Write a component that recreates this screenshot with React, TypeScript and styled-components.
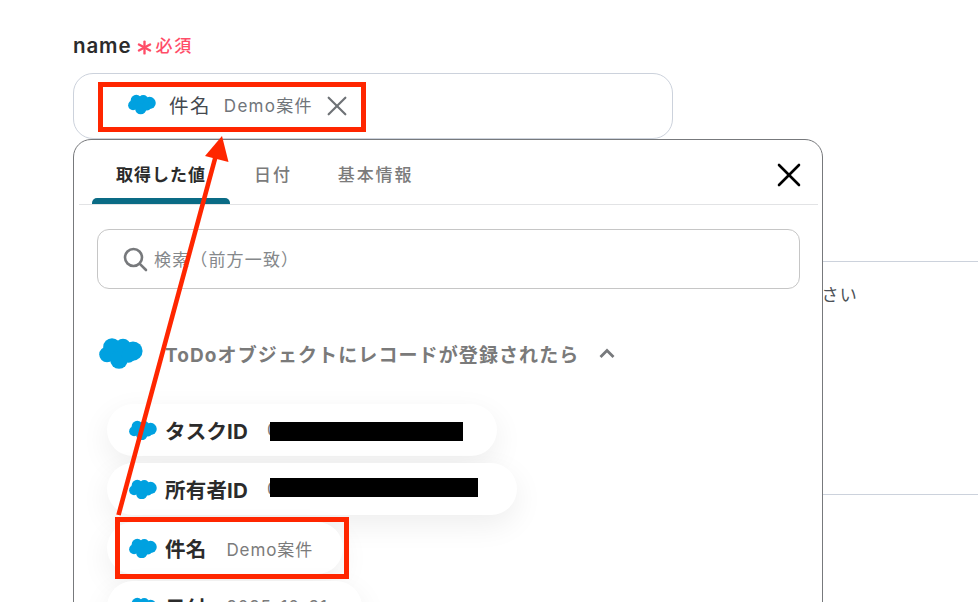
import React from "react";
import styled, { createGlobalStyle } from "styled-components";

const GlobalStyle = createGlobalStyle`
  html, body {
    margin: 0;
    padding: 0;
    background: #fff;
    font-family: "Inter", "Noto Sans CJK JP", sans-serif;
    overflow: hidden;
  }
`;

const Page = styled.div`
  position: relative;
  width: 978px;
  height: 602px;
  overflow: hidden;
  padding: 32px 0 0 73px;
  box-sizing: border-box;
`;

const LabelRow = styled.div`
  display: flex;
  align-items: center;
  height: 26px;
  margin-bottom: 15px;
`;

const LabelText = styled.span`
  font-size: 20.5px;
  font-weight: 600;
  letter-spacing: 0.9px;
  color: #2b2b2b;
`;

const Asterisk = styled.svg`
  width: 15px;
  height: 15px;
  margin: 4px 4px 0 5px;
`;

const Required = styled.span`
  font-size: 17px;
  font-weight: 500;
  letter-spacing: 1.8px;
  color: #ff4d68;
  margin-top: -2px;
`;

const Field = styled.div`
  display: flex;
  align-items: center;
  width: 600px;
  height: 66px;
  padding: 0 0 3px 27px;
  box-sizing: border-box;
  border: 1px solid #ccd2dc;
  border-radius: 20px;
`;

const Chip = styled.div`
  display: flex;
  align-items: center;
  height: 40px;
  width: 262px;
  padding-left: 27px;
  box-sizing: border-box;
  border-radius: 20px;
`;

const ChipName = styled.span`
  margin-left: 13px;
  font-size: 19.5px;
  letter-spacing: 1.4px;
  color: #44494f;
`;

const ChipValue = styled.span`
  margin-left: 13px;
  font-size: 17px;
  letter-spacing: 1.3px;
  color: #70757a;
`;

const ChipClose = styled.svg`
  width: 20px;
  height: 20px;
  margin: 2px 0 0 14px;
`;

const BackSection = styled.div`
  margin-top: 122px;
  height: 234px;
  width: 905px;
  box-sizing: border-box;
  padding: 19px 120px 0 0;
  border-top: 1px solid #ccd2dc;
  border-bottom: 1px solid #ccd2dc;
  text-align: right;
  font-size: 17px;
  letter-spacing: 1.2px;
  color: #4c5157;
`;

const Popup = styled.div`
  position: absolute;
  left: 73px;
  top: 139px;
  width: 750px;
  height: 520px;
  box-sizing: border-box;
  background: #fff;
  border: 1px solid #77797c;
  border-radius: 18px;
  padding: 0 4px 0 5px;
`;

const TabBar = styled.div`
  display: flex;
  align-items: stretch;
  height: 65px;
  box-sizing: border-box;
  padding-left: 13px;
  border-bottom: 1px solid #e2e3e5;
`;

const Tab = styled.div<{ $active?: boolean }>`
  position: relative;
  display: flex;
  align-items: center;
  padding: 3px ${(p) => (p.$active ? 24 : 22)}px 0 24px;
  font-size: 17px;
  font-weight: ${(p) => (p.$active ? 700 : 500)};
  letter-spacing: ${(p) => (p.$active ? 1 : 1.9)}px;
  color: ${(p) => (p.$active ? "#2b2b2b" : "#7b7b7b")};

  ${(p) =>
    p.$active &&
    `
    &::after {
      content: "";
      position: absolute;
      left: 0;
      right: 0;
      bottom: 0;
      height: 6px;
      border-radius: 5px 5px 0 0;
      background: #0a6b85;
    }
  `}
`;

const TabSpacer = styled.div`
  flex: 1;
`;

const CloseButton = styled.svg`
  width: 24px;
  height: 24px;
  margin: 23px 17px 0 0;
`;

const Body = styled.div`
  padding: 24px 18px 0 18px;
`;

const SearchBox = styled.div`
  display: flex;
  align-items: center;
  height: 60px;
  box-sizing: border-box;
  padding: 0 0 1px 24px;
  border: 1px solid #c6c6c6;
  border-radius: 12px;
`;

const SearchIcon = styled.svg`
  width: 26px;
  height: 26px;
  margin-right: 6px;
`;

const Placeholder = styled.span`
  font-size: 17px;
  letter-spacing: 1.15px;
  color: #85888b;
  margin-top: -1px;
`;

const GroupHeader = styled.div`
  display: flex;
  align-items: center;
  margin: 47px 0 0 2px;
  height: 34px;
`;

const GroupTitle = styled.span`
  margin-left: 22px;
  font-size: 19px;
  font-weight: 700;
  letter-spacing: 1.1px;
  color: #7a7a7a;
`;

const Chevron = styled.svg`
  width: 20px;
  height: 20px;
  margin-left: 18px;
`;

const PillList = styled.div`
  display: flex;
  flex-direction: column;
  align-items: flex-start;
  gap: 7px;
  margin: 34px 0 0 10px;
`;

const Pill = styled.div<{ $width: number }>`
  display: flex;
  align-items: center;
  width: ${(p) => p.$width}px;
  height: 52px;
  flex: none;
  box-sizing: border-box;
  padding-left: 22px;
  background: #fff;
  border-radius: 26px;
  box-shadow: 0 10px 30px rgba(0, 0, 0, 0.07);
`;

const PillName = styled.span`
  margin-left: 8px;
  font-size: 20.5px;
  font-weight: 700;
  letter-spacing: 0.2px;
  color: #2b2b2b;
  white-space: nowrap;
`;

const PillValue = styled.span`
  margin-left: 20px;
  font-size: 17px;
  letter-spacing: 0.9px;
  color: #7b7b7b;
  white-space: nowrap;
`;

const RedactedValue = styled.span`
  display: flex;
  align-items: center;
  margin-left: 19px;
  font-size: 17px;
  color: #7b7b7b;
`;

const Redaction = styled.span<{ $width: number; $shift: number }>`
  display: block;
  width: ${(p) => p.$width}px;
  height: 19px;
  margin-left: -8px;
  background: #000;
  transform: translateY(${(p) => p.$shift}px);
`;

const RedBox = styled.div<{ $left: number; $top: number; $width: number; $height: number }>`
  position: absolute;
  left: ${(p) => p.$left}px;
  top: ${(p) => p.$top}px;
  width: ${(p) => p.$width}px;
  height: ${(p) => p.$height}px;
  box-sizing: border-box;
  border: 5px solid #ff2600;
  pointer-events: none;
`;

const ArrowLayer = styled.svg`
  position: absolute;
  left: 0;
  top: 0;
  width: 978px;
  height: 602px;
  pointer-events: none;
`;

function CloudLogo({ size }: { size: number }) {
  return (
    <svg width={size} height={size * 0.73} viewBox="0 0 44 32" style={{ flex: "none" }}>
      <g fill="#00a1e0">
        <circle cx="13" cy="10" r="8.8" />
        <circle cx="24" cy="9.5" r="7.8" />
        <circle cx="34" cy="14" r="9.6" />
        <circle cx="8" cy="17.5" r="7.8" />
        <circle cx="20" cy="23" r="8.8" />
        <circle cx="29.5" cy="19" r="6.8" />
      </g>
    </svg>
  );
}

function XIcon({ color, width }: { color: string; width: number }) {
  return (
    <g stroke={color} strokeWidth={width} strokeLinecap="round" fill="none">
      <path d="M2 2 L22 22" />
      <path d="M22 2 L2 22" />
    </g>
  );
}

export default function App() {
  return (
    <>
      <GlobalStyle />
      <Page>
        <LabelRow>
          <LabelText>name</LabelText>
          <Asterisk viewBox="0 0 14 14">
            <g stroke="#ff4d68" strokeWidth="2.2" strokeLinecap="round">
              <path d="M7 1.5 V12.5" />
              <path d="M1.8 4.2 L12.2 9.8" />
              <path d="M12.2 4.2 L1.8 9.8" />
            </g>
          </Asterisk>
          <Required>必須</Required>
        </LabelRow>

        <Field>
          <Chip>
            <CloudLogo size={28} />
            <ChipName>件名</ChipName>
            <ChipValue>Demo案件</ChipValue>
            <ChipClose viewBox="0 0 24 24">
              <XIcon color="#6e7276" width={2.6} />
            </ChipClose>
          </Chip>
        </Field>

        <BackSection>さい</BackSection>

        <Popup>
          <TabBar>
            <Tab $active>取得した値</Tab>
            <Tab>日付</Tab>
            <Tab>基本情報</Tab>
            <TabSpacer />
            <CloseButton viewBox="0 0 24 24">
              <XIcon color="#000" width={2.6} />
            </CloseButton>
          </TabBar>
          <Body>
            <SearchBox>
              <SearchIcon viewBox="0 0 26 26">
                <circle cx="11.5" cy="11.5" r="8.5" fill="none" stroke="#77797c" strokeWidth="2.6" />
                <path d="M17.8 17.8 L24 24" stroke="#77797c" strokeWidth="2.6" strokeLinecap="round" />
              </SearchIcon>
              <Placeholder>検索（前方一致）</Placeholder>
            </SearchBox>

            <GroupHeader>
              <CloudLogo size={44} />
              <GroupTitle>ToDoオブジェクトにレコードが登録されたら</GroupTitle>
              <Chevron viewBox="0 0 20 20">
                <path d="M3.5 14 L10 7.5 L16.5 14" fill="none" stroke="#77797c" strokeWidth="2.8" />
              </Chevron>
            </GroupHeader>

            <PillList>
              <Pill $width={390}>
                <CloudLogo size={28} />
                <PillName>タスクID</PillName>
                <RedactedValue>
                  0<Redaction $width={193} $shift={1} />
                </RedactedValue>
              </Pill>
              <Pill $width={410}>
                <CloudLogo size={28} />
                <PillName>所有者ID</PillName>
                <RedactedValue>
                  0<Redaction $width={208} $shift={-2} />
                </RedactedValue>
              </Pill>
              <Pill $width={236}>
                <CloudLogo size={28} />
                <PillName>件名</PillName>
                <PillValue>Demo案件</PillValue>
              </Pill>
              <Pill $width={255}>
                <CloudLogo size={28} />
                <PillName>日付</PillName>
                <PillValue>2025-10-31</PillValue>
              </Pill>
            </PillList>
          </Body>
        </Popup>

        <RedBox $left={98} $top={82} $width={268} $height={50} />
        <RedBox $left={115} $top={517} $width={234} $height={62} />

        <ArrowLayer viewBox="0 0 978 602">
          <path d="M118.5 515 L216 155" stroke="#ff2600" strokeWidth="4.6" fill="none" />
          <path d="M222 136 L205 156 L228.5 162 Z" fill="#ff2600" />
        </ArrowLayer>
      </Page>
    </>
  );
}
